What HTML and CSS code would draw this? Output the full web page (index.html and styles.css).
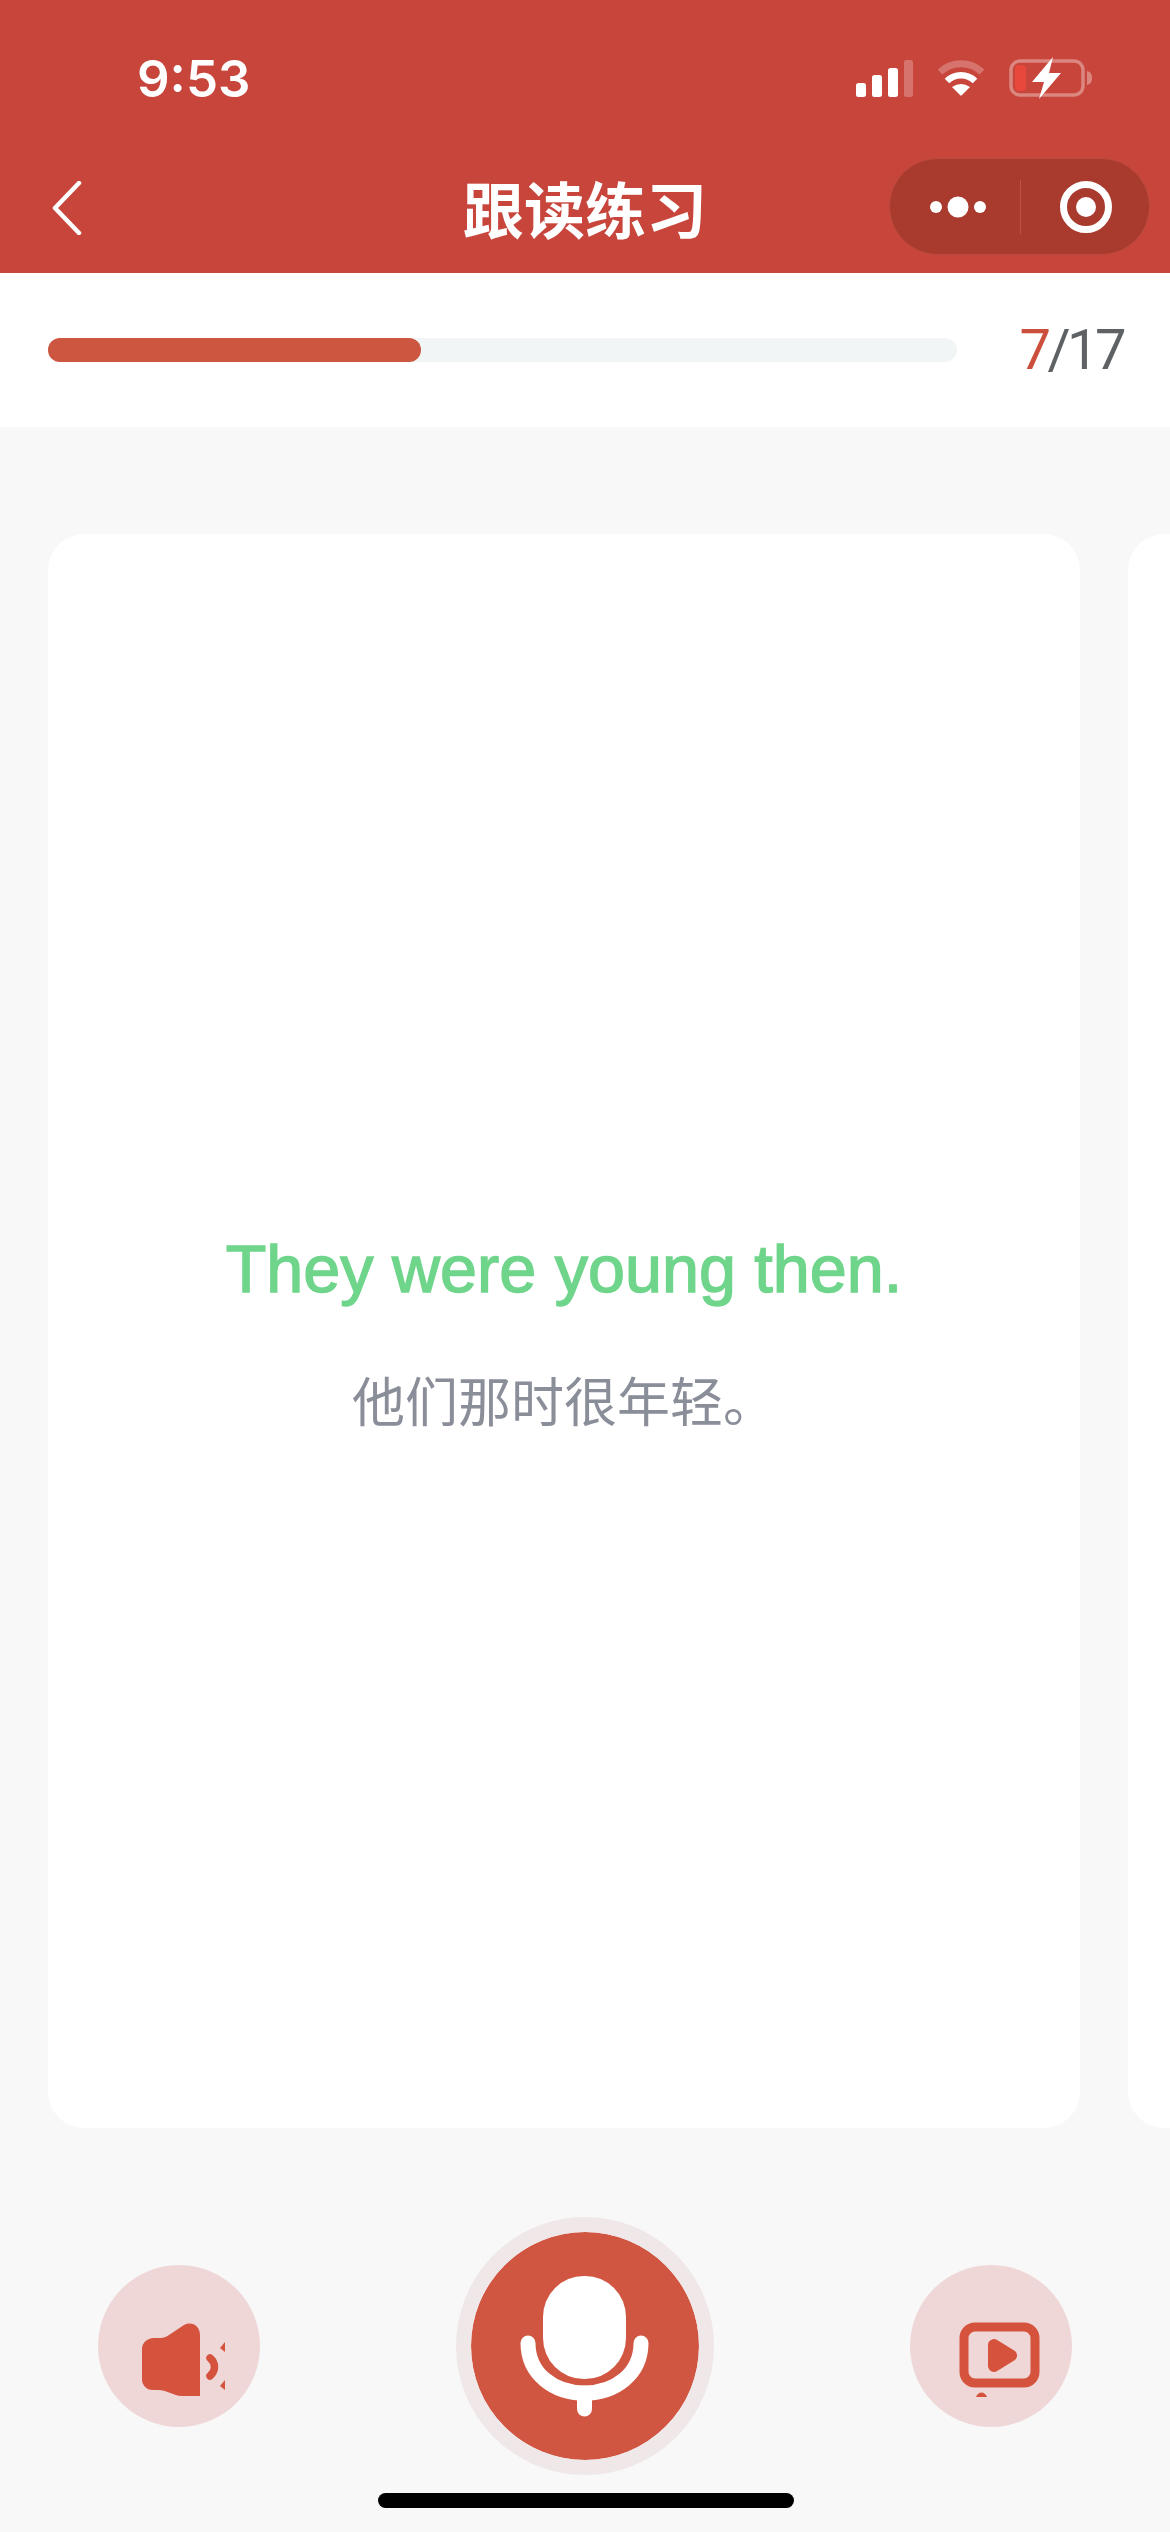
FILE: index.html
```html
<!DOCTYPE html>
<html lang="zh-CN">
<head>
    <meta charset="UTF-8">
    <meta name="viewport" content="width=device-width, initial-scale=1.0">
    <title>跟读练习</title>
    <link rel="stylesheet" href="styles.css">
</head>
<body>
    <header class="top">
        <div class="status-bar">
            <span class="time">9:53</span>
            <div class="status-icons">
                <svg class="signal" width="58" height="38" viewBox="0 0 58 38">
                    <rect x="1" y="24" width="10" height="14" rx="2.5" fill="#fff"/>
                    <rect x="17" y="16" width="10" height="22" rx="2.5" fill="#fff"/>
                    <rect x="33" y="9" width="10" height="29" rx="2.5" fill="#fff"/>
                    <rect x="49" y="1" width="9" height="37" rx="2.5" fill="#fff" opacity="0.25"/>
                </svg>
                <svg class="wifi" width="48" height="36" viewBox="0 0 48 36">
                    <path d="M3 12 A31 31 0 0 1 45 12" fill="none" stroke="#fff" stroke-width="7" opacity="0.25"/>
                    <path d="M10 21 A20 20 0 0 1 38 21" fill="none" stroke="#fff" stroke-width="6.5"/>
                    <path d="M15 27 Q24 21 33 27 L25 35 Q24 36 23 35 Z" fill="#fff"/>
                </svg>
                <svg class="battery" width="84" height="42" viewBox="0 0 84 42">
                    <rect x="2" y="4" width="72" height="34" rx="9" fill="none" stroke="#fff" stroke-width="3.5" opacity="0.35"/>
                    <rect x="6" y="8" width="11" height="26" rx="4" fill="#e8483c"/>
                    <path d="M78 14 C82 15 83 18 83 21 C83 24 82 27 78 28 Z" fill="#fff" opacity="0.35"/>
                    <path d="M44 0 L23 25 H35 L30 42 L52 16 H40 Z" fill="#fff"/>
                </svg>
            </div>
        </div>
        <nav class="nav-bar">
            <a class="back">
                <svg width="30" height="54" viewBox="0 0 30 54">
                    <path d="M27 2 L3 27 L27 52" fill="none" stroke="#fff" stroke-width="4.5" stroke-linecap="round" stroke-linejoin="round"/>
                </svg>
            </a>
            <h1 class="title">跟读练习</h1>
            <div class="capsule">
                <svg class="dots" width="56" height="22" viewBox="0 0 56 22">
                    <circle cx="6" cy="11" r="6" fill="#fff"/>
                    <circle cx="28" cy="11" r="10.5" fill="#fff"/>
                    <circle cx="50" cy="11" r="6" fill="#fff"/>
                </svg>
                <span class="capsule-line"></span>
                <svg class="target" width="54" height="54" viewBox="0 0 54 54">
                    <circle cx="27" cy="27" r="22.5" fill="none" stroke="#fff" stroke-width="7"/>
                    <circle cx="27" cy="27" r="10" fill="#fff"/>
                </svg>
            </div>
        </nav>
    </header>

    <section class="progress-row">
        <div class="track"><div class="fill" style="width: 41%"></div></div>
        <div class="count"><span class="count-now">7</span>/17</div>
    </section>

    <main class="content">
        <div class="cards">
            <article class="card">
                <p class="sentence">They were young then.</p>
                <p class="translation">他们那时很年轻。</p>
            </article>
            <article class="card"></article>
        </div>

        <div class="controls">
            <button class="round-btn">
                <svg width="162" height="162" viewBox="0 0 162 162">
                    <path d="M56 73 H62 C66 73 70 71 74 68 L86 60 C94 56 102 61 102 70 V131 H84 C75 131 70 125 60 125 H55 C48 125 44 120 44 114 V84 C44 78 49 73 56 73 Z" fill="#d5523c"/>
                    <path d="M112 93 C118 98 118 106 112 111" fill="none" stroke="#d5523c" stroke-width="7.5" stroke-linecap="round"/>
                    <path d="M127 77 L122 83 L127 87 Z" fill="#d5523c"/>
                    <path d="M127 115 L122 121 L127 125 Z" fill="#d5523c"/>
                </svg>
            </button>
            <button class="mic-btn">
                <svg width="228" height="228" viewBox="0 0 228 228">
                    <rect x="72" y="44" width="83" height="103" rx="41" fill="#fff"/>
                    <path d="M57 111 C57 142 83 161 113.500 161 C144 161 170 142 170 111" fill="none" stroke="#fff" stroke-width="15" stroke-linecap="round"/>
                    <path d="M113.500 161 V177" fill="none" stroke="#fff" stroke-width="15" stroke-linecap="round"/>
                </svg>
            </button>
            <button class="round-btn">
                <svg width="162" height="162" viewBox="0 0 162 162">
                    <rect x="54" y="62" width="71" height="56" rx="11" fill="none" stroke="#d5523c" stroke-width="9"/>
                    <path d="M84 80 V101 L101 90.500 Z" fill="#d5523c" stroke="#d5523c" stroke-width="12" stroke-linejoin="round"/>
                    <path d="M66 132 C68 126 75 126 77 132 Z" fill="#d5523c"/>
                </svg>
            </button>
        </div>
    </main>

    <div class="home-bar"></div>
</body>
</html>
```

FILE: styles.css
```css
* {
    box-sizing: border-box;
}

body {
    position: relative;
    display: flex;
    flex-direction: column;
    width: 1170px;
    height: 2532px;
    margin: 0;
    overflow: hidden;
    background-color: #f8f8f9;
    font-family: "Liberation Sans", "Noto Sans CJK SC", sans-serif;
}

/* Red header with status bar and nav */
.top {
    height: 273px;
    background-color: #c8453b;
    color: #fff;
}

.status-bar {
    display: flex;
    justify-content: space-between;
    align-items: center;
    height: 154px;
    padding: 2px 77px 0 137px;
}

.time {
    font-family: Inter, sans-serif;
    font-size: 51px;
    font-weight: 600;
}

.status-icons {
    display: flex;
    align-items: center;
    gap: 24px;
}

.nav-bar {
    display: grid;
    grid-template-columns: 1fr auto 1fr;
    align-items: center;
    height: 107px;
    padding: 0 20px;
}

.back {
    display: flex;
    margin-left: 32px;
}

.title {
    margin: 0;
    font-family: "Noto Sans CJK SC", sans-serif;
    font-size: 61px;
    font-weight: 700;
    line-height: 1;
}

.capsule {
    justify-self: end;
    display: flex;
    align-items: center;
    width: 261px;
    height: 97px;
    margin-top: -2px;
    padding-left: 40px;
    background-color: #a93a2e;
    border: 1px solid #bb4a3e;
    border-radius: 49px;
}

.capsule-line {
    width: 1px;
    height: 54px;
    margin: 0 38px 0 34px;
    background-color: #bd5247;
}

/* Progress row */
.progress-row {
    display: flex;
    align-items: center;
    justify-content: space-between;
    height: 154px;
    padding: 0 47px 0 48px;
    background-color: #fff;
}

.track {
    width: 909px;
    height: 24px;
    background-color: #f2f5f5;
    border-radius: 12px;
}

.fill {
    height: 100%;
    background-color: #cd5640;
    border-radius: 12px;
}

.count {
    font-family: Roboto, sans-serif;
    font-size: 56px;
    letter-spacing: -3.500px;
    color: #5f6265;
}

.count-now {
    color: #cb4f3c;
}

/* Cards */
.content {
    flex: 1;
    display: flex;
    flex-direction: column;
}

.cards {
    display: flex;
    gap: 48px;
    padding: 107px 0 0 48px;
    overflow: hidden;
}

.card {
    flex: 0 0 1032px;
    display: flex;
    flex-direction: column;
    align-items: center;
    justify-content: center;
    height: 1594px;
    padding-top: 6px;
    background-color: #fff;
    border-radius: 36px;
}

.sentence {
    margin: 0 0 54px;
    font-size: 66.500px;
    line-height: 76px;
    color: #6fd58b;
    -webkit-text-stroke: 1.400px #6fd58b;
}

.translation {
    margin: 0;
    font-family: "Noto Sans CJK SC", sans-serif;
    font-size: 53px;
    line-height: 76px;
    color: #8a8e99;
}

/* Bottom buttons */
.controls {
    display: flex;
    justify-content: space-between;
    align-items: center;
    padding: 89px 98px 0;
}

.round-btn {
    width: 162px;
    height: 162px;
    padding: 0;
    border: 0;
    border-radius: 50%;
    background-color: #efd6d7;
}

.mic-btn {
    width: 258px;
    height: 258px;
    padding: 0;
    border: 15px solid #f0e7e8;
    border-radius: 50%;
    background-color: #d15641;
    background-clip: padding-box;
}

.round-btn svg,
.mic-btn svg {
    display: block;
}

.home-bar {
    position: absolute;
    left: 378px;
    bottom: 24px;
    width: 416px;
    height: 15px;
    background-color: #000;
    border-radius: 8px;
}
```
